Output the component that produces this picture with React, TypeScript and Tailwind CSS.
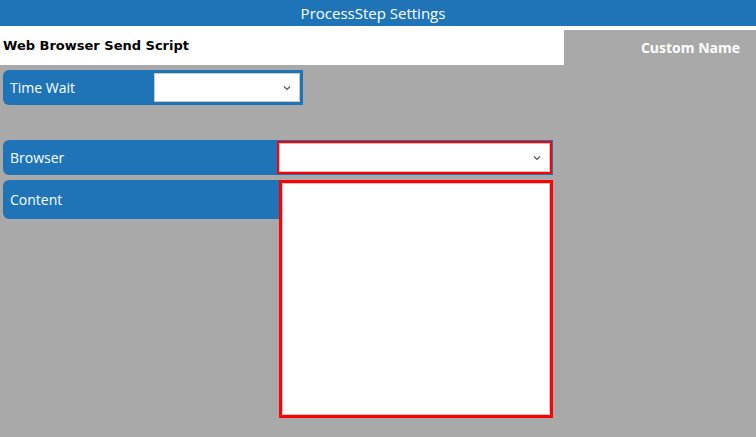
function Chevron() {
  return (
    <svg width="8" height="5" viewBox="0 0 8 5" className="absolute right-[8px] top-1/2 -translate-y-1/2">
      <path d="M1 1l3 3 3-3" fill="none" stroke="#555" strokeWidth="1.2" />
    </svg>
  );
}

function Select({ className }: { className: string }) {
  return (
    <div className={`relative bg-white ${className}`}>
      <Chevron />
    </div>
  );
}

export default function App() {
  return (
    <div className="w-full h-[437px] bg-[#a9a9a9] overflow-hidden font-['Open_Sans',sans-serif]">
      <header className="h-[26px] bg-[#1e74b7] flex items-center justify-center pr-[10px] text-white text-[15px] leading-none">
        ProcessStep Settings
      </header>
      <div className="flex">
        <div className="w-[564px]">
          <div className="h-[39px] bg-white flex items-center px-[3px] font-['DejaVu_Sans',sans-serif] font-bold text-[13px] text-black">
            Web Browser Send Script
          </div>
          <div className="mt-[5px] ml-[3px] w-[300px] h-[35px] bg-[#1e74b7] rounded-l-[6px] flex items-center pl-[7px] pr-[3px]">
            <span className="flex-1 text-white text-[14px]">Time Wait</span>
            <Select className="w-[146px] h-[29px] border border-[#c8c8c8]" />
          </div>
          <div className="mt-[35px] ml-[3px] w-[550px] h-[35px] bg-[#1e74b7] rounded-l-[6px] flex items-center pl-[7px] pr-[1px]">
            <span className="flex-1 text-white text-[14px]">Browser</span>
            <div className="w-[275px] h-[33px] border-2 border-[#ff0000]">
              <Select className="h-full border border-[#c8c8c8]" />
            </div>
          </div>
          <div className="mt-[5px] ml-[3px] flex items-start">
            <div className="w-[277px] h-[39px] bg-[#1e74b7] rounded-l-[6px] flex items-center pl-[7px] text-white text-[14px]">
              Content
            </div>
            <div className="w-[274px] h-[238px] -ml-[1px] border-[3px] border-[#ff0000]">
              <div className="h-full bg-white border border-[#c8c8c8]" />
            </div>
          </div>
        </div>
        <div className="flex-1 border-t-4 border-white h-[39px] flex items-center justify-end pr-[16px] text-white font-bold text-[14px]">
          Custom Name
        </div>
      </div>
    </div>
  );
}
